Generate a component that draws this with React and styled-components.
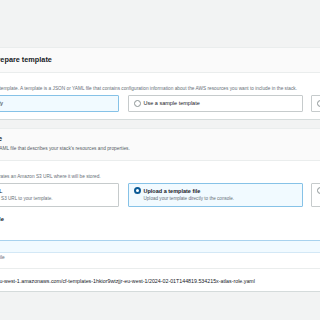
import React from "react";
import styled, { createGlobalStyle } from "styled-components";

const GlobalStyle = createGlobalStyle`
  html, body { margin: 0; padding: 0; }
  body {
    background: #f2f3f3;
    overflow: hidden;
    width: 320px;
    height: 320px;
    font-family: "Liberation Sans", Arial, sans-serif;
    color: #16191f;
  }
`;

const Main = styled.main`
  display: flex;
  flex-direction: column;
  gap: 8px;
  padding-top: 47px;
  margin-left: -64px;
  width: 620px;
`;

const Panel = styled.section`
  background: #ffffff;
  border-top: 1px solid #eaeded;
  border-bottom: 1px solid #d5dbdb;
`;

const Header = styled.header`
  background: #fafafa;
  border-bottom: 1px solid #eaeded;
  padding: ${(p) => (p.$tall ? "6px 8px 8px" : "8px 8px 8px")};
  display: flex;
  flex-direction: column;
  gap: 3px;
`;

const Title = styled.h2`
  margin: 0;
  font-size: 7.3px;
  line-height: 8px;
  font-weight: 700;
  color: #16191f;
`;

const HeaderDesc = styled.p`
  margin: 0;
  font-size: 4.8px;
  line-height: 6px;
  color: #545b64;
`;

const Body = styled.div`
  padding: 4px 8px ${(p) => p.$pb || 7}px;
  display: flex;
  flex-direction: column;
`;

const Label = styled.div`
  font-size: 5.8px;
  line-height: 7px;
  font-weight: 700;
  color: #16191f;
  margin-top: ${(p) => p.$mt || 0}px;
`;

const Desc = styled.div`
  font-size: 4.75px;
  line-height: 6px;
  color: #687078;
  margin-top: ${(p) => p.$mt || 2}px;
`;

const Tiles = styled.div`
  display: grid;
  grid-template-columns: 175px 175px 175px;
  column-gap: 8.5px;
  margin-top: 3px;
`;

const Tile = styled.div`
  box-sizing: border-box;
  display: flex;
  align-items: flex-start;
  gap: 3px;
  padding: 4px 5px;
  border: 1px solid ${(p) => (p.$selected ? "#86c2e7" : "#c6cbcc")};
  background: ${(p) => (p.$selected ? "#f1faff" : "#ffffff")};
  border-radius: 1px;
`;

const Radio = styled.span`
  box-sizing: border-box;
  flex: none;
  width: 7px;
  height: 7px;
  margin-top: -0.5px;
  border-radius: 50%;
  border: ${(p) => (p.$checked ? "2px solid #0a5a96" : "1px solid #8d9596")};
  background: #ffffff;
`;

const TileText = styled.div`
  display: flex;
  flex-direction: column;
  gap: 2px;
`;

const TileLabel = styled.div`
  font-size: 5.5px;
  line-height: 6px;
  font-weight: ${(p) => (p.$bold ? 700 : 400)};
  color: #16191f;
  white-space: nowrap;
`;

const TileDesc = styled.div`
  font-size: 4.6px;
  line-height: 6px;
  color: #687078;
  white-space: nowrap;
`;

const ChooseButton = styled.button`
  align-self: flex-start;
  margin-top: 4px;
  height: 10px;
  padding: 0 6px;
  font-family: inherit;
  font-size: 5px;
  font-weight: 700;
  color: #545b64;
  background: #ffffff;
  border: 1px solid #545b64;
  border-radius: 1px;
`;

const Band = styled.div`
  margin: 3px -8px 0;
  height: 11px;
  background: #f1faff;
  border-top: 1px solid #a8d2ee;
  border-bottom: 1px solid #d3e8f6;
`;

const Divider = styled.div`
  margin: 7px -8px 0;
  border-top: 1px solid #eaeded;
`;

const Url = styled.div`
  font-size: 5.3px;
  line-height: 7px;
  margin-top: 9px;
  padding-left: 8px;
  color: #16191f;
  white-space: nowrap;
`;

function OptionTile({ selected, label, desc, bold }) {
  return (
    <Tile $selected={selected}>
      <Radio $checked={selected} />
      <TileText>
        <TileLabel $bold={bold}>{label}</TileLabel>
        {desc && <TileDesc>{desc}</TileDesc>}
      </TileText>
    </Tile>
  );
}

export default function App() {
  return (
    <>
      <GlobalStyle />
      <Main>
        <Panel>
          <Header>
            <Title>Prerequisite - Prepare template</Title>
          </Header>
          <Body>
            <Label>Prepare template</Label>
            <Desc>
              Every stack is based on a template. A template is a JSON or YAML file that contains
              configuration information about the AWS resources you want to include in the stack.
            </Desc>
            <Tiles>
              <OptionTile selected label="Template is ready" />
              <OptionTile label="Use a sample template" />
              <OptionTile label="Create template in Designer" />
            </Tiles>
          </Body>
        </Panel>
        <Panel>
          <Header $tall>
            <Title>Specify template</Title>
            <HeaderDesc>
              A template is a JSON or YAML file that describes your stack's resources and properties.
            </HeaderDesc>
          </Header>
          <Body $pb={6}>
            <Label>Template source</Label>
            <Desc>
              Selecting a template generates an Amazon S3 URL where it will be stored.
            </Desc>
            <Tiles>
              <OptionTile
                bold
                label="Amazon S3 URL"
                desc="Provide an Amazon S3 URL to your template."
              />
              <OptionTile
                bold
                selected
                label="Upload a template file"
                desc="Upload your template directly to the console."
              />
              <OptionTile
                bold
                label="Sync from Git - new"
                desc="Sync a template from your Git repository."
              />
            </Tiles>
            <Label $mt={9}>Upload a template file</Label>
            <ChooseButton>Choose file</ChooseButton>
            <Band />
            <Desc $mt={2}>JSON or YAML formatted file</Desc>
            <Divider />
            <Url>
              S3 URL: https://s3.eu-west-1.amazonaws.com/cf-templates-1hkior9wtzjjr-eu-west-1/2024-02-01T144819.534215x-atlas-role.yaml
            </Url>
          </Body>
        </Panel>
      </Main>
    </>
  );
}
